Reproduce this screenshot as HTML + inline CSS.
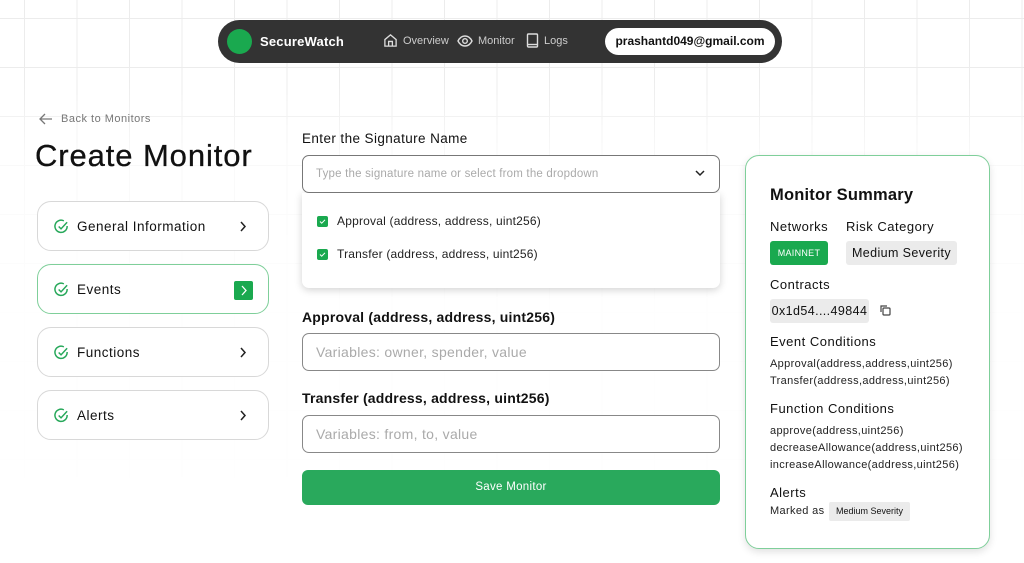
<!DOCTYPE html>
<html><head><meta charset="utf-8"><style>
*{box-sizing:border-box;margin:0;padding:0}
body{width:1024px;height:563px;overflow:hidden;background:#fff;font-family:"Liberation Sans",sans-serif;color:#111;position:relative}
.grid{position:absolute;left:0;top:0;width:1024px;height:563px;
background-image:linear-gradient(#ececec 1px,transparent 1px),linear-gradient(90deg,#ececec 1px,transparent 1px);
background-size:52.5px 49px;background-position:24px 18px;
-webkit-mask-image:linear-gradient(#000 0,#000 80px,rgba(0,0,0,.3) 160px,rgba(0,0,0,0.08) 300px,rgba(0,0,0,0) 563px);}
.a{position:absolute}
.nav{left:218px;top:20px;width:564px;height:43px;background:#333;border-radius:22px}
.card{position:absolute;left:37px;width:232px;height:50px;border:1px solid #d8d8d8;border-radius:14px;background:#fff}
.card span{position:absolute;left:39px;top:17px;font-size:13.5px;color:#111;letter-spacing:.5px}
.card svg.c{position:absolute;left:16px;top:17px}
.card .ch{position:absolute;left:201px;top:19px}
.inp{position:absolute;left:302px;width:418px;height:38px;border:1px solid #888;border-radius:7px;background:#fff;font-size:14px;color:#aaa;padding:10px 13px;letter-spacing:.3px}
.lbl{position:absolute;left:302px;font-size:14px;font-weight:bold;color:#111;letter-spacing:.2px}
.s{position:absolute;font-size:13px;color:#111;letter-spacing:.5px;font-weight:500}
.m{position:absolute;font-size:11px;color:#222;letter-spacing:.35px;line-height:17px}
.cb{position:absolute;left:317px;width:11px;height:11px;background:#1aa94f;border-radius:2px}
</style></head><body>
<div class="grid"></div>
<div class="a nav"></div>
<div class="a" style="left:227px;top:29px;width:25px;height:25px;border-radius:50%;background:#1aa94f"></div>
<div class="a" style="left:260px;top:34px;font-size:13px;font-weight:bold;color:#fff;letter-spacing:.2px">SecureWatch</div>
<svg class="a" style="left:383px;top:33px" width="15" height="15" viewBox="0 0 16 16" fill="none" stroke="#ddd" stroke-width="1.4"><path d="M2 7l6-5 6 5v7H2z"/><path d="M6 14V9h4v5"/></svg>
<div class="a" style="left:403px;top:35px;font-size:11px;color:#ccc">Overview</div>
<svg class="a" style="left:457px;top:34px" width="16" height="14" viewBox="0 0 16 14" fill="none" stroke="#ddd" stroke-width="1.4"><path d="M1 7c2-4 5-5 7-5s5 1 7 5c-2 4-5 5-7 5S3 11 1 7z"/><circle cx="8" cy="7" r="2.3"/></svg>
<div class="a" style="left:478px;top:35px;font-size:11px;color:#ccc">Monitor</div>
<svg class="a" style="left:526px;top:33px" width="13" height="15" viewBox="0 0 13 15" fill="none" stroke="#ddd" stroke-width="1.4"><rect x="1.5" y="1" width="10" height="13" rx="1"/><path d="M1.5 11.5h10"/></svg>
<div class="a" style="left:544px;top:35px;font-size:11px;color:#ccc">Logs</div>
<div class="a" style="left:605px;top:28px;width:170px;height:27px;border-radius:14px;background:#fff;font-size:12px;font-weight:bold;text-align:center;line-height:27px">prashantd049@gmail.com</div>

<svg class="a" style="left:39px;top:113px" width="14" height="12" viewBox="0 0 14 12" fill="none" stroke="#777" stroke-width="1.3"><path d="M13 6H1M6 1L1 6l5 5"/></svg>
<div class="a" style="left:61px;top:113px;font-size:11px;color:#777;letter-spacing:.5px">Back to Monitors</div>
<div class="a" style="left:35px;top:138px;font-size:31px;color:#111;letter-spacing:.9px;-webkit-text-stroke:.3px #111">Create Monitor</div>

<div class="card" style="top:201px"><svg class="c" width="15" height="15" viewBox="0 0 16 16" fill="none" stroke="#27a85a" stroke-width="1.6"><path d="M14 7.5A6.5 6.5 0 1 1 10.5 2"/><path d="M5 8l2.5 2.5L14 3.5"/></svg><span>General Information</span><svg class="ch" width="8" height="11" viewBox="0 0 8 11" fill="none" stroke="#222" stroke-width="1.5"><path d="M2 1l4 4.5L2 10"/></svg></div>
<div class="card" style="top:264px;border-color:#7fcf9a"><svg class="c" width="15" height="15" viewBox="0 0 16 16" fill="none" stroke="#27a85a" stroke-width="1.6"><path d="M14 7.5A6.5 6.5 0 1 1 10.5 2"/><path d="M5 8l2.5 2.5L14 3.5"/></svg><span>Events</span><div style="position:absolute;left:196px;top:16px;width:19px;height:19px;background:#1aa94f;border-radius:2px"></div><svg class="ch" style="left:202px;top:20px" width="8" height="11" viewBox="0 0 8 11" fill="none" stroke="#fff" stroke-width="1.3"><path d="M2 1l4 4.5L2 10"/></svg></div>
<div class="card" style="top:327px"><svg class="c" width="15" height="15" viewBox="0 0 16 16" fill="none" stroke="#27a85a" stroke-width="1.6"><path d="M14 7.5A6.5 6.5 0 1 1 10.5 2"/><path d="M5 8l2.5 2.5L14 3.5"/></svg><span>Functions</span><svg class="ch" width="8" height="11" viewBox="0 0 8 11" fill="none" stroke="#222" stroke-width="1.5"><path d="M2 1l4 4.5L2 10"/></svg></div>
<div class="card" style="top:390px"><svg class="c" width="15" height="15" viewBox="0 0 16 16" fill="none" stroke="#27a85a" stroke-width="1.6"><path d="M14 7.5A6.5 6.5 0 1 1 10.5 2"/><path d="M5 8l2.5 2.5L14 3.5"/></svg><span>Alerts</span><svg class="ch" width="8" height="11" viewBox="0 0 8 11" fill="none" stroke="#222" stroke-width="1.5"><path d="M2 1l4 4.5L2 10"/></svg></div>

<div class="a" style="left:302px;top:131px;font-size:13.5px;color:#111;letter-spacing:.4px">Enter the Signature Name</div>
<div class="a" style="left:302px;top:193px;width:418px;height:95px;background:#fff;border-radius:0 0 7px 7px;box-shadow:0 2px 8px rgba(0,0,0,.18)"></div>
<div class="inp" style="top:155px;font-size:11.5px;padding-top:12px;color:#aaa;border-color:#777;letter-spacing:.2px">Type the signature name or select from the dropdown</div>
<svg class="a" style="left:695px;top:170px" width="10" height="7" viewBox="0 0 10 7" fill="none" stroke="#222" stroke-width="1.5"><path d="M1 1l4 4 4-4"/></svg>
<div class="cb" style="top:216px"></div><svg class="a" style="left:319px;top:218px" width="7" height="7" viewBox="0 0 7 7" fill="none" stroke="#fff" stroke-width="1"><path d="M1 3.5l1.7 1.7L6 1.8"/></svg>
<div class="a" style="left:337px;top:214px;font-size:12px;color:#222;letter-spacing:.2px">Approval (address, address, uint256)</div>
<div class="cb" style="top:249px"></div><svg class="a" style="left:319px;top:251px" width="7" height="7" viewBox="0 0 7 7" fill="none" stroke="#fff" stroke-width="1"><path d="M1 3.5l1.7 1.7L6 1.8"/></svg>
<div class="a" style="left:337px;top:247px;font-size:12px;color:#222;letter-spacing:.2px">Transfer (address, address, uint256)</div>

<div class="lbl" style="top:309px">Approval (address, address, uint256)</div>
<div class="inp" style="top:333px">Variables: owner, spender, value</div>
<div class="lbl" style="top:390px">Transfer (address, address, uint256)</div>
<div class="inp" style="top:415px">Variables: from, to, value</div>
<div class="a" style="left:302px;top:470px;width:418px;height:35px;background:#29a95c;border-radius:6px;color:#fff;font-size:11.5px;text-align:center;line-height:35px;letter-spacing:.3px">Save Monitor</div>

<div class="a" style="left:745px;top:155px;width:245px;height:394px;border:1px solid #7fcf9a;border-radius:14px;background:#fff;box-shadow:0 3px 8px rgba(0,0,0,.12)"></div>
<div class="a" style="left:770px;top:186px;font-size:16.5px;font-weight:bold;letter-spacing:.2px">Monitor Summary</div>
<div class="s" style="left:770px;top:219px">Networks</div>
<div class="s" style="left:846px;top:219px">Risk Category</div>
<div class="a" style="left:770px;top:241px;width:58px;height:24px;background:#1aa94f;border-radius:3px;color:#fff;font-size:9px;text-align:center;line-height:24px;letter-spacing:.3px">MAINNET</div>
<div class="a" style="left:846px;top:241px;width:111px;height:24px;background:#ebebeb;border-radius:3px;font-size:12.5px;text-align:center;line-height:24px;letter-spacing:.4px">Medium Severity</div>
<div class="s" style="left:770px;top:277px">Contracts</div>
<div class="a" style="left:770px;top:299px;width:99px;height:24px;background:#ebebeb;border-radius:3px;font-size:12.5px;text-align:center;line-height:24px;letter-spacing:.4px">0x1d54....49844</div>
<svg class="a" style="left:879px;top:304px" width="13" height="13" viewBox="0 0 13 13" fill="none" stroke="#444" stroke-width="1.2"><rect x="4" y="4" width="7" height="7" rx="1"/><path d="M2 8V2h6"/></svg>
<div class="s" style="left:770px;top:334px">Event Conditions</div>
<div class="m" style="left:770px;top:356px">Approval(address,address,uint256)<br>Transfer(address,address,uint256)</div>
<div class="s" style="left:770px;top:401px">Function Conditions</div>
<div class="m" style="left:770px;top:423px">approve(address,uint256)<br>decreaseAllowance(address,uint256)<br>increaseAllowance(address,uint256)</div>
<div class="s" style="left:770px;top:485px">Alerts</div>
<div class="m" style="left:770px;top:503px">Marked as</div>
<div class="a" style="left:829px;top:502px;width:81px;height:19px;background:#ebebeb;border-radius:2px;font-size:9px;text-align:center;line-height:19px">Medium Severity</div>
</body></html>
